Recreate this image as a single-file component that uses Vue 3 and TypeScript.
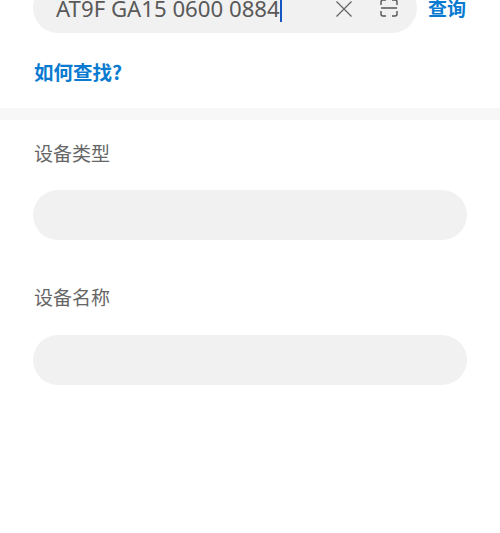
<script setup lang="ts">
const serial = 'AT9F GA15 0600 0884'
</script>

<template>
  <div class="page">
    <section class="top">
      <div class="row">
        <div class="search">
          <span class="value">{{ serial }}</span><span class="caret"></span>
          <svg class="clear" viewBox="0 0 16 16" width="16" height="16"><path d="M.5.5 15.5 15.5M15.5.5.5 15.5" stroke="#666" stroke-width="1.3" fill="none"/></svg>
          <svg class="scan" viewBox="0 0 18 18" width="18" height="18"><path d="M1 6V3a2 2 0 0 1 2-2h3M12 1h3a2 2 0 0 1 2 2v3M1 12v3a2 2 0 0 0 2 2h3M12 17h3a2 2 0 0 0 2-2v-3M1 9h16" stroke="#555" stroke-width="1.4" fill="none"/></svg>
        </div>
        <span class="query">查询</span>
      </div>
      <div class="how">如何查找?</div>
    </section>
    <div class="divider"></div>
    <section class="form">
      <div class="label">设备类型</div>
      <div class="field"></div>
      <div class="label second">设备名称</div>
      <div class="field low"></div>
    </section>
  </div>
</template>

<style>
html, body { margin: 0; background: #fff; }
</style>

<style scoped>
.page { width: 500px; height: 533px; overflow: hidden; background: #fff; font-family: "Noto Sans CJK SC", "Noto Sans", sans-serif; }
.top { display: flow-root; padding: 0 33px 0 34px; height: 108px; box-sizing: border-box; }
.row { display: flex; align-items: flex-start; gap: 11px; height: 50px; margin-top: -17px; margin-left: -1px; }
.search { width: 384px; height: 50px; border-radius: 25px; background: #f1f1f1; display: flex; align-items: center; padding-left: 23px; box-sizing: border-box; position: relative; flex: none; }
.value { font-family: "Noto Sans", sans-serif; font-size: 22.2px; line-height: 30px; color: #595959; white-space: nowrap; margin-top: 1px; }
.caret { width: 2.5px; height: 25px; background: #1557c0; margin-top: 3px; }
.clear { position: absolute; left: 303px; top: 18px; }
.scan { position: absolute; left: 347px; top: 16px; }
.query { font-size: 19px; font-weight: 700; color: #0a7bd0; line-height: 28px; white-space: nowrap; margin-top: 11px; }
.how { margin-top: 25px; font-size: 19.5px; font-weight: 700; color: #0a7bd0; line-height: 28px; white-space: nowrap; }
.divider { height: 12px; background: #f7f7f7; }
.form { padding: 19px 33px 0; }
.label { font-size: 19px; color: #666; line-height: 28px; margin-left: 1px; }
.field { margin-top: 23px; width: 434px; height: 50px; border-radius: 25px; background: #f1f1f1; }
.second { margin-top: 43px; }
.low { margin-top: 24px; }
</style>
